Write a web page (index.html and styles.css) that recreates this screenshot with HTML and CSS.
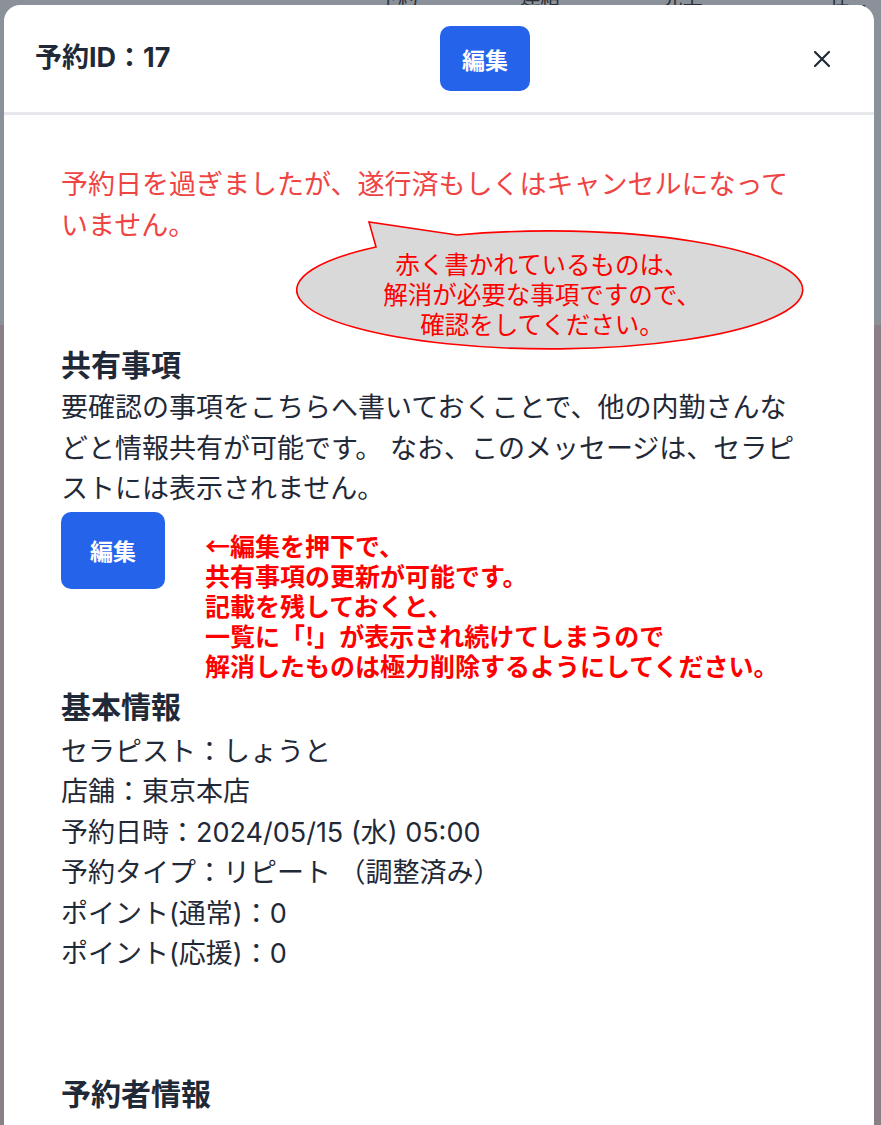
FILE: index.html
```html
<!DOCTYPE html>
<html lang="ja">
<head>
<meta charset="utf-8">
<title>予約ID：17</title>
<link rel="stylesheet" href="styles.css">
</head>
<body>
<div class="behind">
  <span>予約 ⋮ ⋮</span><span>連絡 ⋮ ⋮</span><span>売上 ⋮ ⋮</span><span>一 在 ⋮ ⋮</span>
</div>

<div class="modal">
  <header class="modal-header">
    <h2 class="modal-title">予約ID：17</h2>
    <button class="btn btn-header">編集</button>
    <button class="close" aria-label="閉じる">
      <svg width="18" height="18" viewBox="0 0 18 18"><path d="M2 2 L16 16 M16 2 L2 16" stroke="#1f2937" stroke-width="2.2" stroke-linecap="round"/></svg>
    </button>
  </header>

  <div class="modal-body">
    <p class="alert">予約日を過ぎましたが、遂行済もしくはキャンセルになっていません。</p>

    <div class="bubble">
      <svg width="525" height="145" viewBox="0 0 525 145">
        <path d="M167,18 A253,59 0 1,1 86,30 L79,5 Z" fill="#d9d9d9" stroke="#ff0000" stroke-width="1.6"/>
        <text x="252" y="57" text-anchor="middle" class="bubble-text">赤く書かれているものは、</text>
        <text x="252" y="87" text-anchor="middle" class="bubble-text">解消が必要な事項ですので、</text>
        <text x="252" y="117" text-anchor="middle" class="bubble-text">確認をしてください。</text>
      </svg>
    </div>

    <section class="section">
      <h3 class="section-title">共有事項</h3>
      <p class="text">要確認の事項をこちらへ書いておくことで、他の内勤さんなどと情報共有が可能です。 なお、このメッセージは、セラピストには表示されません。</p>
      <div class="edit-row">
        <button class="btn btn-edit">編集</button>
        <p class="note">←編集を押下で、<br>共有事項の更新が可能です。<br>記載を残しておくと、<br>一覧に「!」が表示され続けてしまうので<br>解消したものは極力削除するようにしてください。</p>
      </div>
    </section>

    <section class="section basic">
      <h3 class="section-title">基本情報</h3>
      <ul class="info">
        <li>セラピスト：しょうと</li>
        <li>店舗：東京本店</li>
        <li>予約日時：2024/05/15 (水) 05:00</li>
        <li>予約タイプ：リピート （調整済み）</li>
        <li>ポイント(通常)：0</li>
        <li>ポイント(応援)：0</li>
      </ul>
    </section>

    <section class="section booker">
      <h3 class="section-title">予約者情報</h3>
    </section>
  </div>
</div>
</body>
</html>
```

FILE: styles.css
```css
* { box-sizing: border-box; }

html, body {
  margin: 0;
  padding: 0;
  height: 100%;
}

body {
  background: linear-gradient(to bottom, #8b9199 0, #8b9199 325px, #8a7f87 325px, #8a7f87 100%);
  font-family: "Inter", "Noto Sans CJK JP", sans-serif;
  color: #1f2937;
  overflow: hidden;
  position: relative;
}

.behind {
  display: flex;
  gap: 70px;
  padding-left: 378px;
  margin-top: -15px;
  font-size: 20px;
  line-height: 24px;
  color: #2b2f36;
  font-family: "Noto Sans CJK JP", sans-serif;
}

.modal {
  position: absolute;
  left: 4px;
  top: 5px;
  width: 870px;
  height: 1140px;
  background: #ffffff;
  border-radius: 16px 16px 0 0;
  overflow: hidden;
}

.modal-header {
  height: 110px;
  display: flex;
  align-items: center;
  padding: 0 43px 0 31px;
  border-bottom: 3px solid #e5e7eb;
}

.modal-title {
  flex: 0 0 405px;
  margin: 0;
  font-size: 27px;
  font-weight: 700;
  line-height: 1.5;
  color: #1f2937;
}

.btn {
  border: none;
  background: #2563eb;
  color: #ffffff;
  font-family: "Noto Sans CJK JP", sans-serif;
  font-weight: 700;
  font-size: 23px;
  border-radius: 10px;
  padding: 0;
  cursor: pointer;
}

.btn-header {
  width: 90px;
  height: 65px;
}

.close {
  margin-left: auto;
  border: none;
  background: transparent;
  padding: 0;
  width: 18px;
  height: 18px;
  display: flex;
}

.modal-body {
  position: relative;
  padding: 50px 65px 0 57px;
}

.alert {
  margin: 0 0 97px;
  font-size: 27px;
  line-height: 40.5px;
  color: #ef4444;
}

.bubble {
  position: absolute;
  left: 286px;
  top: 102px;
  width: 525px;
  height: 145px;
}

.bubble svg { display: block; }

.bubble-text {
  font-family: "Noto Sans CJK JP", sans-serif;
  font-size: 24.5px;
  fill: #ff0000;
}

.section-title {
  margin: 0;
  font-size: 30px;
  line-height: 45px;
  font-weight: 700;
  color: #1f2937;
}

.text {
  margin: 0;
  font-size: 27px;
  line-height: 40.5px;
}

.edit-row {
  display: flex;
  align-items: flex-start;
  gap: 40px;
  margin-top: 2px;
}

.btn-edit {
  width: 104px;
  height: 77px;
  flex: 0 0 auto;
}

.note {
  margin: 18px 0 0;
  font-family: "Noto Sans CJK JP", sans-serif;
  font-size: 25px;
  line-height: 30px;
  font-weight: 700;
  color: #ff0000;
  white-space: nowrap;
}

.basic {
  margin-top: 5px;
}

.info {
  list-style: none;
  margin: 2px 0 0;
  padding: 0;
  font-size: 27px;
  line-height: 40.5px;
}

.booker {
  margin-top: 97px;
}
```
